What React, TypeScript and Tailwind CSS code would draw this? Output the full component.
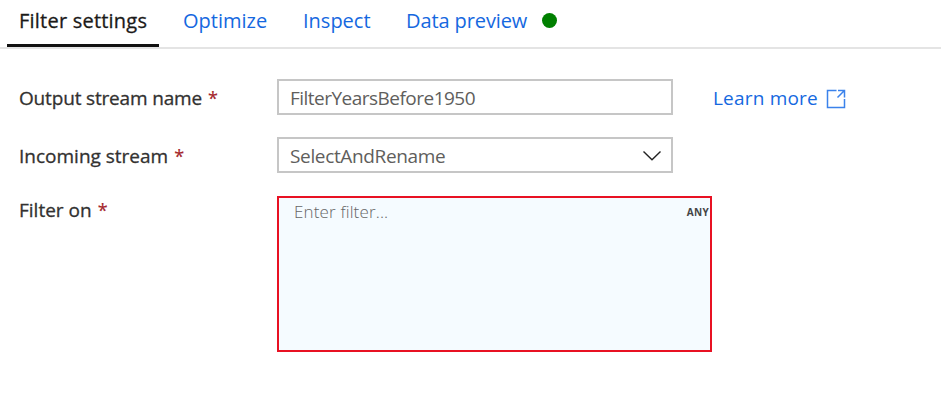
import React from "react";

const tabs = [
  { label: "Optimize", style: "w-[84px] ml-6" },
  { label: "Inspect", style: "w-[67px] ml-9" },
  { label: "Data preview", style: "w-[120px] ml-9 tracking-[-0.1px]" },
];

function Label({ text, tracking = "" }: { text: string; tracking?: string }) {
  return (
    <label className="flex w-[258px] shrink-0 gap-[6px] whitespace-nowrap text-[#323130]">
      <span className={`[-webkit-text-stroke:0.3px_currentColor] ${tracking}`}>{text}</span>
      <span className="text-[18px] text-[#a4262c] [-webkit-text-stroke:0.2px_currentColor]">*</span>
    </label>
  );
}

export default function App() {
  return (
    <div className="h-[409px] w-[941px] overflow-hidden bg-white font-['Open_Sans','Noto_Sans',sans-serif] text-[19px] leading-7 text-[#323130]">
      <nav className="flex h-[49px] items-start whitespace-nowrap border-b-2 border-[#e4e4e4] pl-[7px] pt-[7px] text-[20px] leading-[27px] text-[#1568df]">
        <button className="flex h-10 w-[152px] items-start border-b-[3px] border-[#111] pl-3 text-left leading-[27px] text-[#1b1a19]">
          <span className="tracking-[0.22px] [-webkit-text-stroke:0.3px_currentColor]">Filter settings</span>
        </button>
        {tabs.map((tab) => (
          <a key={tab.label} className={tab.style}>{tab.label}</a>
        ))}
        <span className="ml-[16px] mt-[6px] size-[15px] rounded-full bg-[#008000]" />
      </nav>
      <main className="pl-[19px] pt-[30px]">
        <div className="flex h-9 items-center">
          <div className="pt-0.5">
            <Label text="Output stream name" tracking="tracking-[-0.17px]" />
          </div>
          <div className="flex h-9 w-[396px] items-center border-2 border-[#c6c6c6] pl-[11px] text-[#605e5c]">
            <span className="pt-px tracking-[-0.52px]">FilterYearsBefore1950</span>
          </div>
          <a className="ml-10 flex items-center whitespace-nowrap text-[#1568df]">
            <span className="w-[113px] pt-px tracking-[0.2px]">Learn more</span>
            <svg className="mt-[3px] h-5 w-5" viewBox="0 0 20 20" fill="none" stroke="#3b82eb" strokeWidth="1.5">
              <path d="M10.5 1.5H1.5V18.5H18.5V10M12 1.5H18.5V8.5M18.2 1.8L11.5 8.5" />
            </svg>
          </a>
        </div>
        <div className="mt-[22px] flex h-9 items-center">
          <div className="pt-0.5">
            <Label text="Incoming stream" />
          </div>
          <div className="flex h-9 w-[396px] items-center justify-between border-2 border-[#c6c6c6] pl-[11px] pr-[9px] text-[#605e5c]">
            <span className="pt-px tracking-[-0.35px]">SelectAndRename</span>
            <svg className="mt-0.5 h-5 w-5" viewBox="0 0 20 20" fill="none" stroke="#222" strokeWidth="1.4">
              <path d="M1.5 5.5L10 13.8L18.5 5.5" />
            </svg>
          </div>
        </div>
        <div className="mt-[23px] flex items-start">
          <Label text="Filter on" />
          <div className="flex h-[156px] w-[435px] items-start justify-between border-2 border-[#e81123] bg-[#f5fbff] pl-[15px] pr-px">
            <span className="text-[17px] font-light tracking-[0.15px] text-[#666]">Enter filter...</span>
            <span className="text-[10px] font-bold tracking-[0.3px] text-[#444]">ANY</span>
          </div>
        </div>
      </main>
    </div>
  );
}
